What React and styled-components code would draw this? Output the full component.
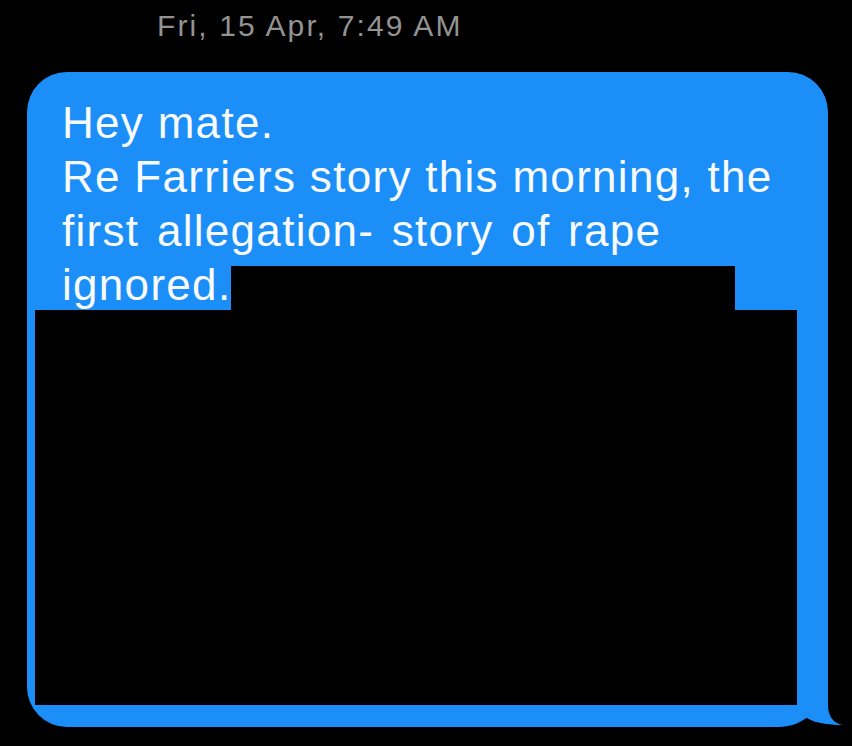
import React from "react";
import styled, { createGlobalStyle } from "styled-components";

const GlobalStyle = createGlobalStyle`
  html, body {
    margin: 0;
    padding: 0;
    background: #000;
  }
  body {
    font-family: "Liberation Sans", Arial, sans-serif;
  }
`;

const Screen = styled.div`
  width: 852px;
  height: 746px;
  background: #000;
  display: flex;
  flex-direction: column;
  overflow: hidden;
`;

const Timestamp = styled.div`
  margin-top: 6px;
  padding-left: 157px;
  font-size: 30px;
  line-height: 40px;
  letter-spacing: 2.1px;
  color: #939393;
  white-space: nowrap;
`;

const Row = styled.div`
  display: flex;
  padding-left: 27px;
  margin-top: 26px;
`;

const Bubble = styled.div`
  position: relative;
  width: 801px;
  height: 655px;
  box-sizing: border-box;
  padding-top: 24px;
  background: #1b8ef8;
  border-radius: 40px 40px 50px 40px;
  display: flex;
  flex-direction: column;
`;

const TextLine = styled.div`
  padding-left: 35px;
  font-size: 44px;
  line-height: 54px;
  letter-spacing: 1.3px;
  word-spacing: ${(p) => p.$ws || 0}px;
  color: #f7faff;
  white-space: nowrap;
`;

const RedactRow = styled(TextLine)`
  display: flex;
  align-items: flex-start;
  height: 52px;
`;

const RedactBar = styled.div`
  width: ${(p) => p.$w}px;
  height: 44px;
  margin-top: 8px;
  background: #000;
`;

const RedactBlock = styled.div`
  position: relative;
  margin: 0 31px 0 8px;
  height: 395px;
  background: #000;
`;

const Tail = styled.svg`
  position: absolute;
  right: -20px;
  bottom: 0;
  width: 60px;
  height: 50px;
`;

export default function App() {
  return (
    <>
      <GlobalStyle />
      <Screen>
        <Timestamp>Fri, 15 Apr, 7:49 AM</Timestamp>
        <Row>
          <Bubble>
            <TextLine>Hey mate.</TextLine>
            <TextLine>Re Farriers story this morning, the</TextLine>
            <TextLine $ws={4}>first allegation- story of rape</TextLine>
            <RedactRow>
              <span>ignored.</span>
              <RedactBar $w={504} />
            </RedactRow>
            <RedactBlock />
            <Tail viewBox="0 0 60 50">
              <path
                d="M40 0 L40 28 C40 40 46 46 54 48 C45 48 28 47 19 41 L10 10 Z"
                fill="#1b8ef8"
              />
            </Tail>
          </Bubble>
        </Row>
      </Screen>
    </>
  );
}
